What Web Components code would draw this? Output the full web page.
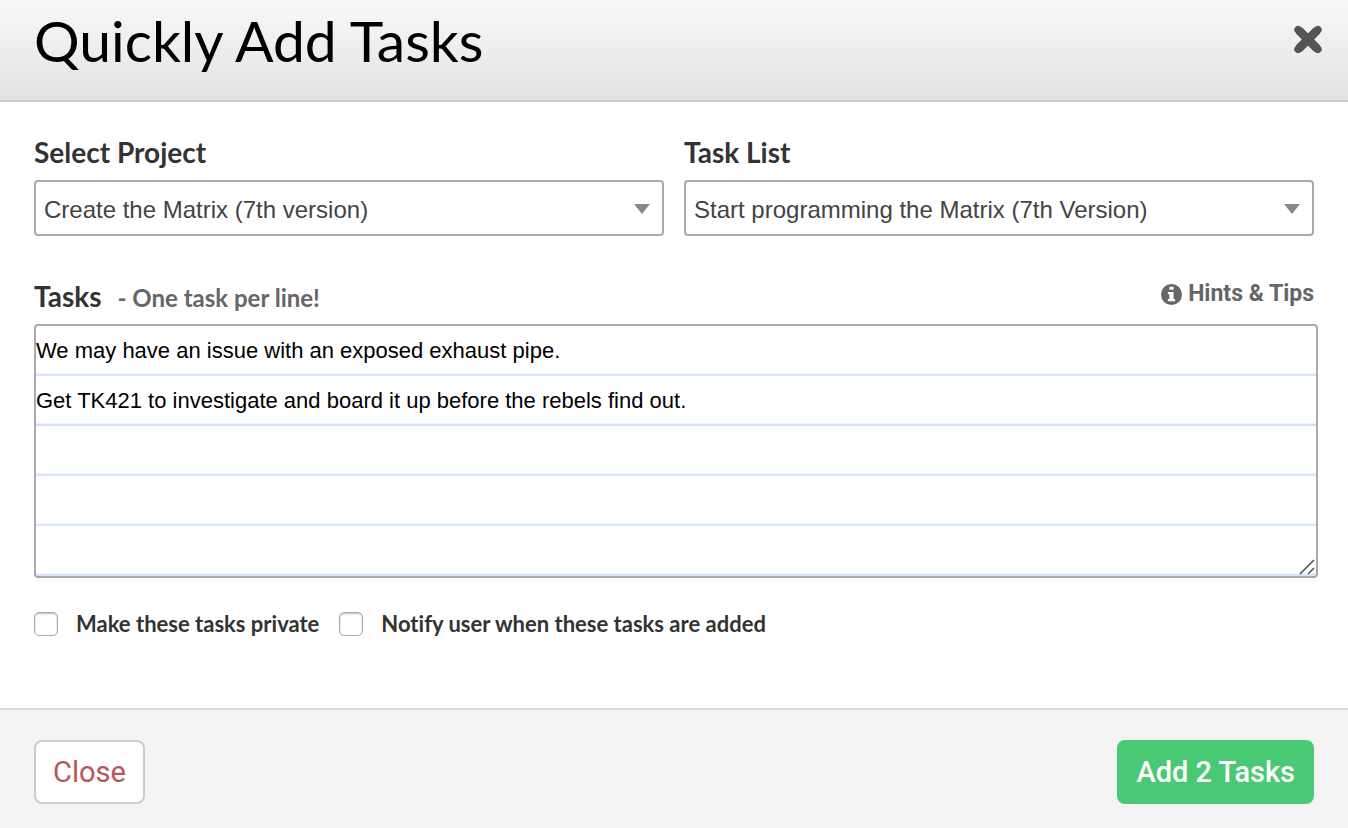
<!DOCTYPE html>
<html lang="en">
<head>
<meta charset="utf-8">
<meta name="viewport" content="width=device-width, initial-scale=1">
<title>Quickly Add Tasks</title>
<style>
  body {
    margin: 0;
    background: #fff;
    color: #333;
    font-family: Lato, "Open Sans", sans-serif;
    font-variant-ligatures: none;
  }
</style>
</head>
<body>
<task-dialog></task-dialog>

<script>
class DialogHeader extends HTMLElement {
  constructor() {
    super();
    this.attachShadow({ mode: "open" });
  }

  static get styles() {
    return `
    :host {
      display: flex;
      justify-content: space-between;
      align-items: flex-start;
      height: 100px;
      padding: 0 26px 0 34px;
      border-bottom: 2px solid #ccc;
      background: linear-gradient(#f8f8f8, #e3e3e3);
    }

    h1 {
      margin: 0;
      color: #000;
      font-size: 57px;
      font-weight: 400;
      line-height: 80px;
    }

    button {
      margin: 25px 0 0;
      padding: 0;
      border: 0;
      background: none;
      cursor: pointer;
    }

    svg {
      display: block;
    }
  `;
  }

  connectedCallback() {
    this.shadowRoot.innerHTML = `
    <style>${DialogHeader.styles}</style>
    <h1><slot></slot></h1>
    <button type="button" aria-label="Close dialog">
      <svg width="28" height="28" viewBox="0 0 28 28">
        <path d="M4.8 5.2 23.2 23.6M23.2 5.2 4.8 23.6" stroke="#555" stroke-width="8.6"/>
        <path d="M4.2 4.8 23.8 24.2M23.8 4.8 4.2 24.2" stroke="#555" stroke-width="7.8" stroke-linecap="round"/>
      </svg>
    </button>
  `;
  }
}

class SelectField extends HTMLElement {
  constructor() {
    super();
    this.attachShadow({ mode: "open" });
  }

  static get styles() {
    return `
    :host {
      display: block;
      min-width: 0;
    }

    label {
      display: block;
      margin-bottom: 12px;
      font-size: 28px;
      font-weight: 700;
      line-height: 32px;
    }

    .box {
      display: grid;
      align-items: center;
    }

    select, svg {
      grid-area: 1 / 1;
    }

    select {
      appearance: none;
      box-sizing: border-box;
      width: 100%;
      height: 56px;
      margin: 0;
      padding: 2px 40px 0 8px;
      border: 2px solid #aaa;
      border-radius: 4px;
      background: #fff;
      color: #444;
      font-family: "Liberation Sans", Arial, sans-serif;
      font-size: 24px;
    }

    svg {
      justify-self: end;
      margin: 2px 14px 0 0;
      pointer-events: none;
    }
  `;
  }

  connectedCallback() {
    this.shadowRoot.innerHTML = `
    <style>${SelectField.styles}</style>
    <label for="field">${this.getAttribute("label")}</label>
    <div class="box">
      <select id="field">
        <option>${this.getAttribute("value")}</option>
      </select>
      <svg width="16" height="10" viewBox="0 0 16 10"><path d="M0 0h16L8 10z" fill="#888"/></svg>
    </div>
  `;
  }
}

class TaskEditor extends HTMLElement {
  constructor() {
    super();
    this.attachShadow({ mode: "open" });
  }

  static get styles() {
    return `
    :host {
      display: block;
    }

    .top {
      display: flex;
      justify-content: space-between;
      align-items: flex-start;
      margin-bottom: 12px;
    }

    label {
      display: flex;
      align-items: baseline;
      gap: 16px;
      font-size: 28px;
      font-weight: 700;
      line-height: 32px;
    }

    small {
      color: #666;
      font-size: 24px;
      line-height: 28px;
    }

    a {
      display: flex;
      align-items: center;
      gap: 6px;
      color: #666;
      font-family: Roboto, sans-serif;
      font-size: 23px;
      font-weight: 700;
      line-height: 28px;
      text-decoration: none;
    }

    .sheet {
      position: relative;
      margin-right: -4px;
    }

    textarea {
      display: block;
      box-sizing: border-box;
      width: 100%;
      height: 254px;
      margin: 0;
      padding: 0;
      border: 2px solid #aaa;
      border-radius: 4px;
      outline: 0;
      resize: none;
      background: repeating-linear-gradient(#fff 0 47px, #eef3ff 47px 48px, #d8e4ff 48px 50px);
      color: #000;
      font-family: "Liberation Sans", Arial, sans-serif;
      font-size: 22px;
      line-height: 50px;
    }

    .grip {
      position: absolute;
      right: 3px;
      bottom: 3px;
      pointer-events: none;
    }
  `;
  }

  connectedCallback() {
    this.shadowRoot.innerHTML = `
    <style>${TaskEditor.styles}</style>
    <div class="top">
      <label for="tasks">Tasks <small>- One task per line!</small></label>
      <a href="#">
        <svg width="21" height="21" viewBox="0 0 20 20">
          <circle cx="10" cy="10" r="10" fill="#666"/>
          <path d="M8 2.5h4v3H8zM6.5 7.5H12v6.7h1.5v2.3h-7v-2.3H8V9.8H6.5z" fill="#fff"/>
        </svg>
        Hints &amp; Tips
      </a>
    </div>
    <div class="sheet">
      <textarea id="tasks"></textarea>
      <svg class="grip" width="16" height="16" viewBox="0 0 16 16">
        <path d="M1 15 15 1M9 15l6-6" stroke="#555" stroke-width="1.6"/>
      </svg>
    </div>
  `;
    this.shadowRoot.querySelector("textarea").value = this.textContent.trim();
  }
}

class CheckField extends HTMLElement {
  constructor() {
    super();
    this.attachShadow({ mode: "open" });
  }

  static get styles() {
    return `
    :host {
      display: block;
    }

    label {
      display: flex;
      align-items: center;
      gap: 18px;
      font-size: 22px;
      font-weight: 700;
      line-height: 28px;
    }

    input {
      appearance: none;
      box-sizing: border-box;
      width: 24px;
      height: 24px;
      margin: 0;
      border: 1px solid #aaa;
      border-radius: 5px;
      background: #fff;
      box-shadow: inset 0 1px 2px #0004;
    }
  `;
  }

  connectedCallback() {
    this.shadowRoot.innerHTML = `
    <style>${CheckField.styles}</style>
    <label><input type="checkbox"><span><slot></slot></span></label>
  `;
  }
}

class DialogButton extends HTMLElement {
  constructor() {
    super();
    this.attachShadow({ mode: "open" });
  }

  static get styles() {
    return `
    :host {
      display: block;
    }

    button {
      height: 64px;
      padding: 0 17px;
      border: 2px solid #ccc;
      border-radius: 8px;
      background: #fff;
      color: #b85659;
      font-family: Roboto, sans-serif;
      font-size: 29px;
      cursor: pointer;
    }

    :host([primary]) button {
      border-color: #4ac975;
      background: #4ac975;
      color: #fff;
      font-weight: 500;
    }
  `;
  }

  connectedCallback() {
    this.shadowRoot.innerHTML = `
    <style>${DialogButton.styles}</style>
    <button type="button"><slot></slot></button>
  `;
  }
}

class TaskDialog extends HTMLElement {
  constructor() {
    super();
    this.attachShadow({ mode: "open" });
  }

  static get styles() {
    return `
    :host {
      display: flex;
      flex-direction: column;
      min-height: 100vh;
    }

    main {
      flex: 1;
      padding: 34px 34px 60px;
    }

    .selects {
      display: grid;
      grid-template-columns: 1fr 1fr;
      gap: 20px;
      margin-bottom: 44px;
    }

    .checks {
      display: flex;
      flex-wrap: wrap;
      gap: 20px;
      margin-top: 32px;
    }

    footer {
      display: flex;
      justify-content: space-between;
      padding: 30px 34px 24px;
      border-top: 2px solid #d8d8d8;
      background: #f4f4f4;
    }
  `;
  }

  connectedCallback() {
    this.shadowRoot.innerHTML = `
    <style>${TaskDialog.styles}</style>
    <dialog-header>Quickly Add Tasks</dialog-header>
    <main>
      <div class="selects">
        <select-field label="Select Project" value="Create the Matrix (7th version)"></select-field>
        <select-field label="Task List" value="Start programming the Matrix (7th Version)"></select-field>
      </div>
      <task-editor>We may have an issue with an exposed exhaust pipe.
Get TK421 to investigate and board it up before the rebels find out.</task-editor>
      <div class="checks">
        <check-field>Make these tasks private</check-field>
        <check-field>Notify user when these tasks are added</check-field>
      </div>
    </main>
    <footer>
      <dialog-button>Close</dialog-button>
      <dialog-button primary>Add 2 Tasks</dialog-button>
    </footer>
  `;
  }
}

customElements.define("dialog-header", DialogHeader);
customElements.define("select-field", SelectField);
customElements.define("task-editor", TaskEditor);
customElements.define("check-field", CheckField);
customElements.define("dialog-button", DialogButton);
customElements.define("task-dialog", TaskDialog);
</script>
</body>
</html>
